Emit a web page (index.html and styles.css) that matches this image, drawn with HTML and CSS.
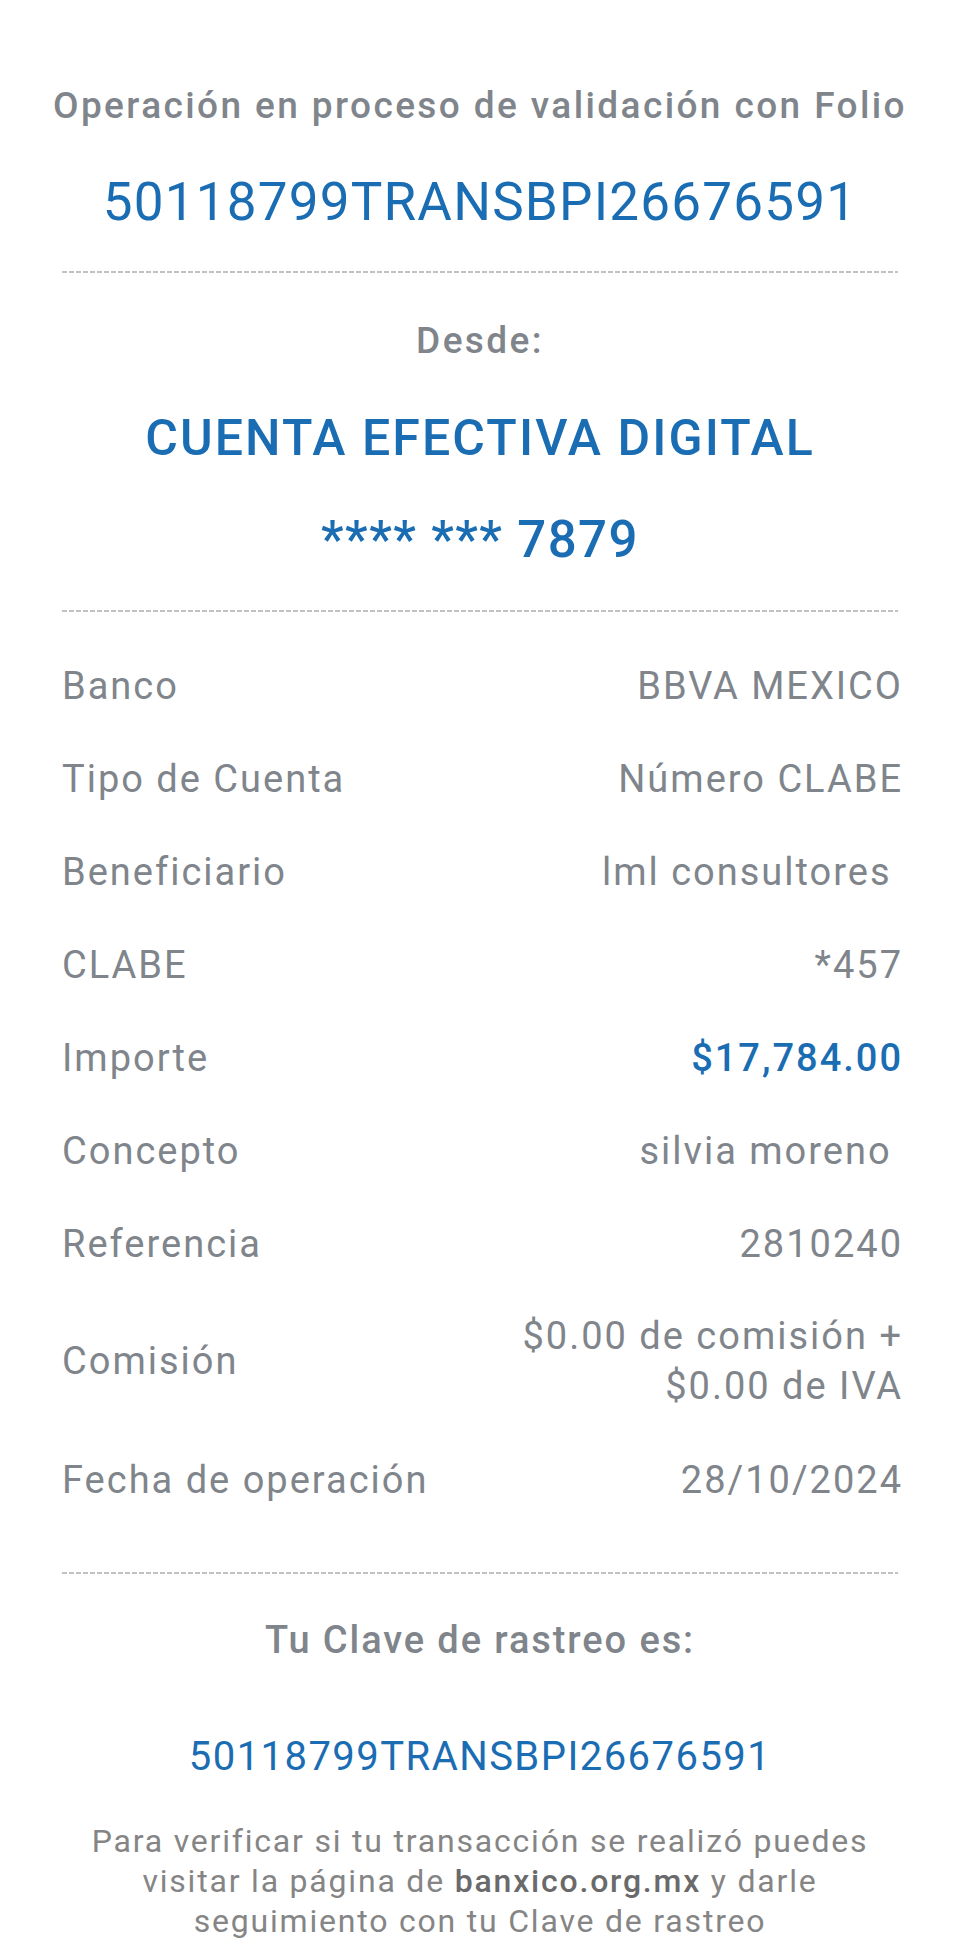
FILE: index.html
```html
<!DOCTYPE html>
<html lang="es">
  <head>
    <meta charset="UTF-8" />
    <meta name="viewport" content="width=device-width, initial-scale=1.0" />
    <title>Comprobante de transferencia</title>
    <link rel="stylesheet" href="styles.css">
  </head>
  <body>
    <div id="receipt">
      <!-- Folio de la operación -->
      <div class="title">Operación en proceso de validación con Folio</div>
      <div class="folio">50118799TRANSBPI26676591</div>

      <div class="divider"></div>

      <!-- Cuenta de origen -->
      <div class="subtitle">Desde:</div>
      <div class="account-name">CUENTA EFECTIVA DIGITAL</div>
      <div class="account-number">**** *** 7879</div>

      <div class="divider"></div>

      <!-- Detalle -->
      <div class="details">
        <div class="row"><span class="label">Banco</span><span class="value">BBVA MEXICO</span></div>
        <div class="row"><span class="label">Tipo de Cuenta</span><span class="value">Número CLABE</span></div>
        <div class="row"><span class="label">Beneficiario</span><span class="value">lml consultores&nbsp;</span></div>
        <div class="row"><span class="label">CLABE</span><span class="value">*457</span></div>
        <div class="row"><span class="label">Importe</span><span class="value amount">$17,784.00</span></div>
        <div class="row"><span class="label">Concepto</span><span class="value">silvia moreno&nbsp;</span></div>
        <div class="row"><span class="label">Referencia</span><span class="value">2810240</span></div>
        <div class="row tall"><span class="label">Comisión</span><span class="value">$0.00 de comisión +<br>$0.00 de IVA</span></div>
        <div class="row"><span class="label">Fecha de operación</span><span class="value">28/10/2024</span></div>
      </div>

      <div class="divider last"></div>

      <!-- Clave de rastreo -->
      <div class="track-title">Tu Clave de rastreo es:</div>
      <div class="track-key">50118799TRANSBPI26676591</div>
      <p class="note">
        Para verificar si tu transacción se realizó puedes<br>
        visitar la página de <b>banxico.org.mx</b> y darle<br>
        seguimiento con tu Clave de rastreo
      </p>
    </div>
  </body>
</html>
```

FILE: styles.css
```css
body {
  margin: 0;
  background: #fff;
  font-family: Roboto, "Liberation Sans", sans-serif;
  color: #80858c;
}

#receipt {
  padding: 82px 62px 0 62px;
  text-align: center;
}

.title {
  font-size: 37px;
  line-height: 48px;
  font-weight: 500;
  letter-spacing: 2.4px;
  white-space: nowrap;
  margin: 0 -20px;
}

.folio {
  margin-top: 40px;
  font-size: 53px;
  line-height: 64px;
  letter-spacing: 1.2px;
  color: #1a6db3;
}

/* dotted separators */
.divider {
  height: 2px;
  margin-top: 37px;
  background: repeating-linear-gradient(to right, #c2c2c2 0 5px, transparent 5px 7px);
}

.subtitle {
  margin-top: 44px;
  font-size: 37px;
  line-height: 48px;
  font-weight: 500;
  letter-spacing: 2.4px;
}

.account-name {
  margin-top: 43px;
  font-size: 50px;
  line-height: 60px;
  font-weight: 500;
  letter-spacing: 2.1px;
  color: #1a6db3;
}

.account-number {
  margin-top: 42px;
  font-size: 51px;
  line-height: 60px;
  font-weight: 500;
  letter-spacing: 1.4px;
  color: #1a6db3;
}

.account-number + .divider {
  margin-top: 40px;
}

/* Detail rows */
.details {
  margin-top: 27px;
}

.row {
  display: flex;
  justify-content: space-between;
  align-items: center;
  height: 93px;
  font-size: 38px;
  letter-spacing: 2px;
  margin-right: -5px;
}

.row.tall {
  height: auto;
  padding: 21px 0 22px;
}

.label {
  text-align: left;
}

.value {
  text-align: right;
  line-height: 50px;
}

.amount {
  color: #1a6db3;
  font-weight: 500;
}

.divider.last {
  margin-top: 46px;
}

.track-title {
  margin-top: 42px;
  font-size: 38px;
  line-height: 48px;
  font-weight: 500;
  letter-spacing: 1.9px;
}

.track-key {
  margin-top: 69px;
  font-size: 40px;
  line-height: 48px;
  letter-spacing: 1.45px;
  color: #1a6db3;
}

.note {
  margin: 40px -40px 0;
  font-size: 32px;
  line-height: 40px;
  letter-spacing: 1.8px;
  color: #858585;
}

.note b {
  font-weight: 500;
  color: #6a6a6a;
}
```
